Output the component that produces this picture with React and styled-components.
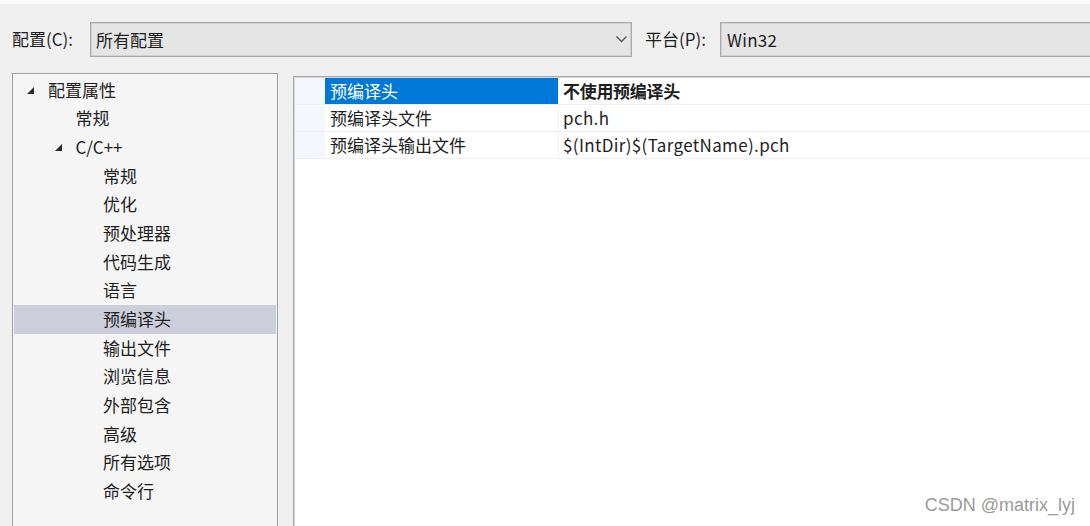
import React from "react";
import styled, { createGlobalStyle } from "styled-components";

const Global = createGlobalStyle`
  html, body { margin: 0; padding: 0; background: #f0f0f0; overflow: hidden; }
  * { box-sizing: border-box; }
`;

const FONT = `"Noto Sans CJK SC", "Noto Sans", sans-serif`;

const Page = styled.div`
  position: relative;
  width: 1090px;
  height: 526px;
  overflow: hidden;
  background: #f0f0f0;
  font-family: ${FONT};
  font-size: 17px;
  color: #1e1e1e;
  display: flex;
  flex-direction: column;
`;

const TopStrip = styled.div`
  height: 4px;
  background: #fafafa;
  flex: none;
`;

const Toolbar = styled.div`
  display: flex;
  align-items: center;
  height: 35px;
  margin-top: 18px;
  padding-left: 12px;
  flex: none;
`;

const Label = styled.span`
  width: ${(p) => p.$w}px;
  flex: none;
  white-space: nowrap;
  line-height: 1;
  padding-bottom: 2px;
`;

const Combo = styled.div`
  display: flex;
  align-items: center;
  height: 35px;
  width: ${(p) => (p.$w ? `${p.$w}px` : "auto")};
  flex: ${(p) => (p.$w ? "none" : "1")};
  margin-right: ${(p) => (p.$w ? "13px" : "-4px")};
  background: #e5e5e5;
  border: 1px solid #a9a9a9;
  box-shadow: inset 0 0 0 1px #d2d2d2;
  padding-left: ${(p) => p.$pl}px;
  padding-right: 3px;
  padding-bottom: 1px;
`;

const ComboText = styled.span`
  flex: 1;
  white-space: nowrap;
  letter-spacing: ${(p) => (p.$latin ? "0.3px" : "0")};
`;

const Chevron = styled.svg`
  width: 13px;
  height: 8px;
  flex: none;
`;

const Body = styled.div`
  display: flex;
  flex: 1;
  margin-top: 16px;
  min-height: 0;
`;

const Tree = styled.div`
  width: 266px;
  margin-left: 12px;
  height: 480px;
  flex: none;
  background: #f5f5f5;
  border: 1px solid #9f9f9f;
  padding: 1px;
  padding-top: 1.7px;
`;

const TreeItem = styled.div`
  display: flex;
  align-items: center;
  height: 28.7px;
  padding-left: ${(p) => 34 + p.$level * 27.5}px;
  padding-bottom: 2px;
  background: ${(p) => (p.$selected ? "#cccedb" : "transparent")};
  position: relative;
  white-space: nowrap;
`;

const Tri = styled.svg`
  position: absolute;
  left: ${(p) => 13 + p.$level * 27.5}px;
  top: 11px;
  width: 8px;
  height: 8px;
`;

const Grid = styled.div`
  flex: 1;
  margin-left: 15px;
  margin-top: 3px;
  margin-right: -4px;
  background: #ffffff;
  border-left: 1px solid #a9a9a9;
  border-top: 1px solid #a9a9a9;
  box-shadow: inset 1px 1px 0 #d6d6d6;
  padding-top: 1px;
  padding-left: 1px;
`;

const Row = styled.div`
  display: grid;
  grid-template-columns: 30px 233px 1fr;
  height: 27px;
  border-bottom: 1px solid #eef0f8;
`;

const Gutter = styled.div`
  background: #f5f7fc;
`;

const NameCell = styled.div`
  display: flex;
  align-items: center;
  padding-left: 5px;
  padding-bottom: 1px;
  background: ${(p) => (p.$selected ? "#0078d7" : "#ffffff")};
  color: ${(p) => (p.$selected ? "#ffffff" : "#1e1e1e")};
  white-space: nowrap;
`;

const ValueCell = styled.div`
  display: flex;
  align-items: center;
  padding-left: 4px;
  padding-bottom: 1px;
  border-left: 1px solid #f2f3f9;
  font-weight: ${(p) => (p.$bold ? 700 : 400)};
  letter-spacing: ${(p) => (p.$latin ? "0.35px" : p.$bold ? "-0.3px" : "0")};
  white-space: nowrap;
`;

const Watermark = styled.div`
  position: absolute;
  right: 15px;
  bottom: 10px;
  font-family: "Liberation Sans", Arial, sans-serif;
  font-size: 18px;
  color: #9a9a9a;
`;

const treeItems = [
  { label: "配置属性", level: 0, expander: true },
  { label: "常规", level: 1 },
  { label: "C/C++", level: 1, expander: true },
  { label: "常规", level: 2 },
  { label: "优化", level: 2 },
  { label: "预处理器", level: 2 },
  { label: "代码生成", level: 2 },
  { label: "语言", level: 2 },
  { label: "预编译头", level: 2, selected: true },
  { label: "输出文件", level: 2 },
  { label: "浏览信息", level: 2 },
  { label: "外部包含", level: 2 },
  { label: "高级", level: 2 },
  { label: "所有选项", level: 2 },
  { label: "命令行", level: 2 },
];

const props = [
  { name: "预编译头", value: "不使用预编译头", selected: true, bold: true },
  { name: "预编译头文件", value: "pch.h", latin: true },
  { name: "预编译头输出文件", value: "$(IntDir)$(TargetName).pch", latin: true },
];

export default function App() {
  return (
    <>
      <Global />
      <Page>
        <TopStrip />
        <Toolbar>
          <Label $w={78}>配置(C):</Label>
          <Combo $w={542} $pl={5}>
            <ComboText>所有配置</ComboText>
            <Chevron viewBox="0 0 13 8">
              <path d="M1.5 1.5 L6.5 6.5 L11.5 1.5" fill="none" stroke="#555" strokeWidth="1.4" />
            </Chevron>
          </Combo>
          <Label $w={75}>平台(P):</Label>
          <Combo $pl={6}>
            <ComboText $latin>Win32</ComboText>
          </Combo>
        </Toolbar>
        <Body>
          <Tree>
            {treeItems.map((t, i) => (
              <TreeItem key={i} $level={t.level} $selected={t.selected}>
                {t.expander && (
                  <Tri $level={t.level} viewBox="0 0 8 8">
                    <polygon points="7,0 7,7 0,7" fill="#2b2b2b" />
                  </Tri>
                )}
                {t.label}
              </TreeItem>
            ))}
          </Tree>
          <Grid>
            {props.map((p, i) => (
              <Row key={i}>
                <Gutter />
                <NameCell $selected={p.selected}>{p.name}</NameCell>
                <ValueCell $bold={p.bold} $latin={p.latin}>{p.value}</ValueCell>
              </Row>
            ))}
          </Grid>
        </Body>
        <Watermark>CSDN @matrix_lyj</Watermark>
      </Page>
    </>
  );
}
